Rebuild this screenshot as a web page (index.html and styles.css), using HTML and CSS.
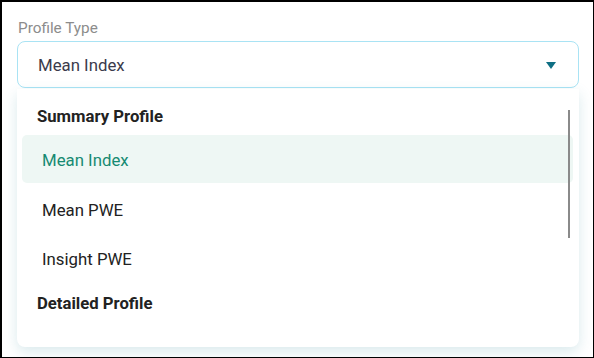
FILE: index.html
```html
<!DOCTYPE html>
<html>
<head>
<meta charset="utf-8">
<link rel="stylesheet" href="styles.css">
</head>
<body>
<div class="frame">
  <div class="field">
    <div class="label">Profile Type</div>
    <div class="select">
      <span class="value">Mean Index</span>
      <svg class="caret" width="10" height="7" viewBox="0 0 10 7"><path d="M0 0 H10 L5 7 Z" fill="#0f6f84"/></svg>
    </div>
    <div class="menu">
      <div class="list">
        <div class="group">Summary Profile</div>
        <div class="item active">Mean Index</div>
        <div class="item">Mean PWE</div>
        <div class="item">Insight PWE</div>
        <div class="group second">Detailed Profile</div>
        <div class="item">Drivers Index</div>
      </div>
      <div class="scrollbar"></div>
    </div>
  </div>
</div>
</body>
</html>
```

FILE: styles.css
```css
* { box-sizing: border-box; }
html, body { margin: 0; padding: 0; background: #fff; }
body { font-family: Roboto, "Noto Sans", Arial, sans-serif; }
.frame {
  width: 594px;
  height: 358px;
  border: 2px solid #000;
  border-right-width: 1.5px;
  border-bottom-width: 1.5px;
  overflow: hidden;
  background: #fff;
}
.field {
  padding: 18px 0 0 15px;
  width: 577px;
}
.label {
  font-size: 15.3px;
  line-height: 17px;
  color: #8c8c8c;
  margin-left: 1px;
  margin-bottom: 4px;
}
.select {
  height: 47px;
  border: 1px solid #a9e3f4;
  border-radius: 8px;
  display: flex;
  align-items: center;
  justify-content: space-between;
  padding: 0 22px 0 20px;
  background: #fff;
}
.value {
  font-size: 16.8px;
  color: #3b3b4b;
}
.caret { display: block; margin-top: 1px; }
.menu {
  position: relative;
  margin-top: 1px;
  height: 258px;
  background: #fff;
  border-radius: 0 0 8px 8px;
  box-shadow: 0 5px 14px rgba(70, 150, 165, 0.2);
  overflow: hidden;
}
.list {
  height: 251px;
  overflow: hidden;
  padding: 8px 6px 0 5px;
}
.group {
  height: 38px;
  display: flex;
  align-items: center;
  padding-left: 15px;
  font-size: 16.7px;
  font-weight: 700;
  color: #222;
}
.group.second { margin-top: 3px; }
.item {
  height: 49px;
  display: flex;
  align-items: center;
  padding: 4px 0 0 20px;
  font-size: 16.8px;
  color: #222;
  border-radius: 5px;
}
.item.active {
  height: 48px;
  padding-top: 2px;
  background: #eef7f4;
  color: #168a72;
}
.scrollbar {
  position: absolute;
  right: 9px;
  top: 21px;
  width: 2px;
  height: 128px;
  background: #8a8a8a;
}
```
